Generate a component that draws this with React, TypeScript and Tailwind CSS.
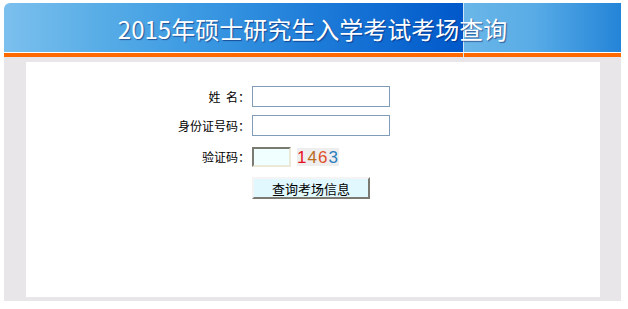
import React from "react";

const cjk = { fontFamily: '"Noto Sans CJK SC", "Noto Sans", sans-serif' };

export default function App() {
  return (
    <div className="w-[628px] h-[309px] bg-white pt-[3px] pl-[4px]" style={cjk}>
      <div className="w-[617px]">
        <div className="h-[49px] rounded-tl-[6px] flex items-center justify-center bg-[linear-gradient(90deg,#7cc0ee_0px,#56ace6_100px,#3a98e2_200px,#1c7ad8_320px,#0058ca_459px,#cfe6f6_459px,#cfe6f6_460px,#6ab6e8_460px,#58ace6_530px,#2484d8_617px)]">
          <span className="text-white text-[24px] leading-none [text-shadow:1px_1px_1px_rgba(0,20,90,0.55)] mt-[2px]">
            2015年硕士研究生入学考试考场查询
          </span>
        </div>
        <div className="h-[1px] bg-white" />
        <div className="h-[4px] bg-[linear-gradient(90deg,#ff6a00_0px,#ff6a00_459px,#cfe6f6_459px,#cfe6f6_460px,#ff6a00_460px)]" />
        <div className="h-[244px] bg-[#e8e6e9] pt-[5px] pb-[4px] pl-[22px] pr-[21px]">
          <div className="h-full bg-white pt-[24px] text-[12px] text-black">
            <div className="flex items-center h-[21px]">
              <div className="ml-[124px] w-[100px] text-right">姓&nbsp;&nbsp;名：</div>
              <div className="ml-[2px] w-[138px] h-[21px] border border-[#7f9db9] bg-white" />
            </div>
            <div className="flex items-center h-[21px] mt-[8px]">
              <div className="ml-[124px] w-[100px] text-right">身份证号码：</div>
              <div className="ml-[2px] w-[138px] h-[21px] border border-[#7f9db9] bg-white" />
            </div>
            <div className="flex items-center h-[20px] mt-[11px]">
              <div className="ml-[124px] w-[100px] text-right">验证码：</div>
              <div className="ml-[2px] w-[39px] h-[20px] border-2 border-t-[#7a7a72] border-l-[#7a7a72] border-b-[#ece9d8] border-r-[#ece9d8] bg-[#f0ffff]" />
              <div
                className="ml-[6px] w-[42px] h-[18px] bg-[#eeeeee] flex items-center justify-center text-[17px] leading-none tracking-[1px]"
                style={{ fontFamily: '"Liberation Sans", Arial, sans-serif' }}
              >
                <span className="text-[#e8101c]">1</span>
                <span className="text-[#b86c1c]">4</span>
                <span className="text-[#e0502a]">6</span>
                <span className="text-[#2a7fc0]">3</span>
              </div>
            </div>
            <div className="flex mt-[10px]">
              <div className="ml-[226px] w-[118px] h-[22px] bg-[#e0f8fe] border-2 border-t-[#f4f4f4] border-l-[#f4f4f4] border-b-[#7a7a72] border-r-[#7a7a72] flex items-center justify-center text-[13px] leading-none">
                查询考场信息
              </div>
            </div>
          </div>
        </div>
      </div>
    </div>
  );
}
